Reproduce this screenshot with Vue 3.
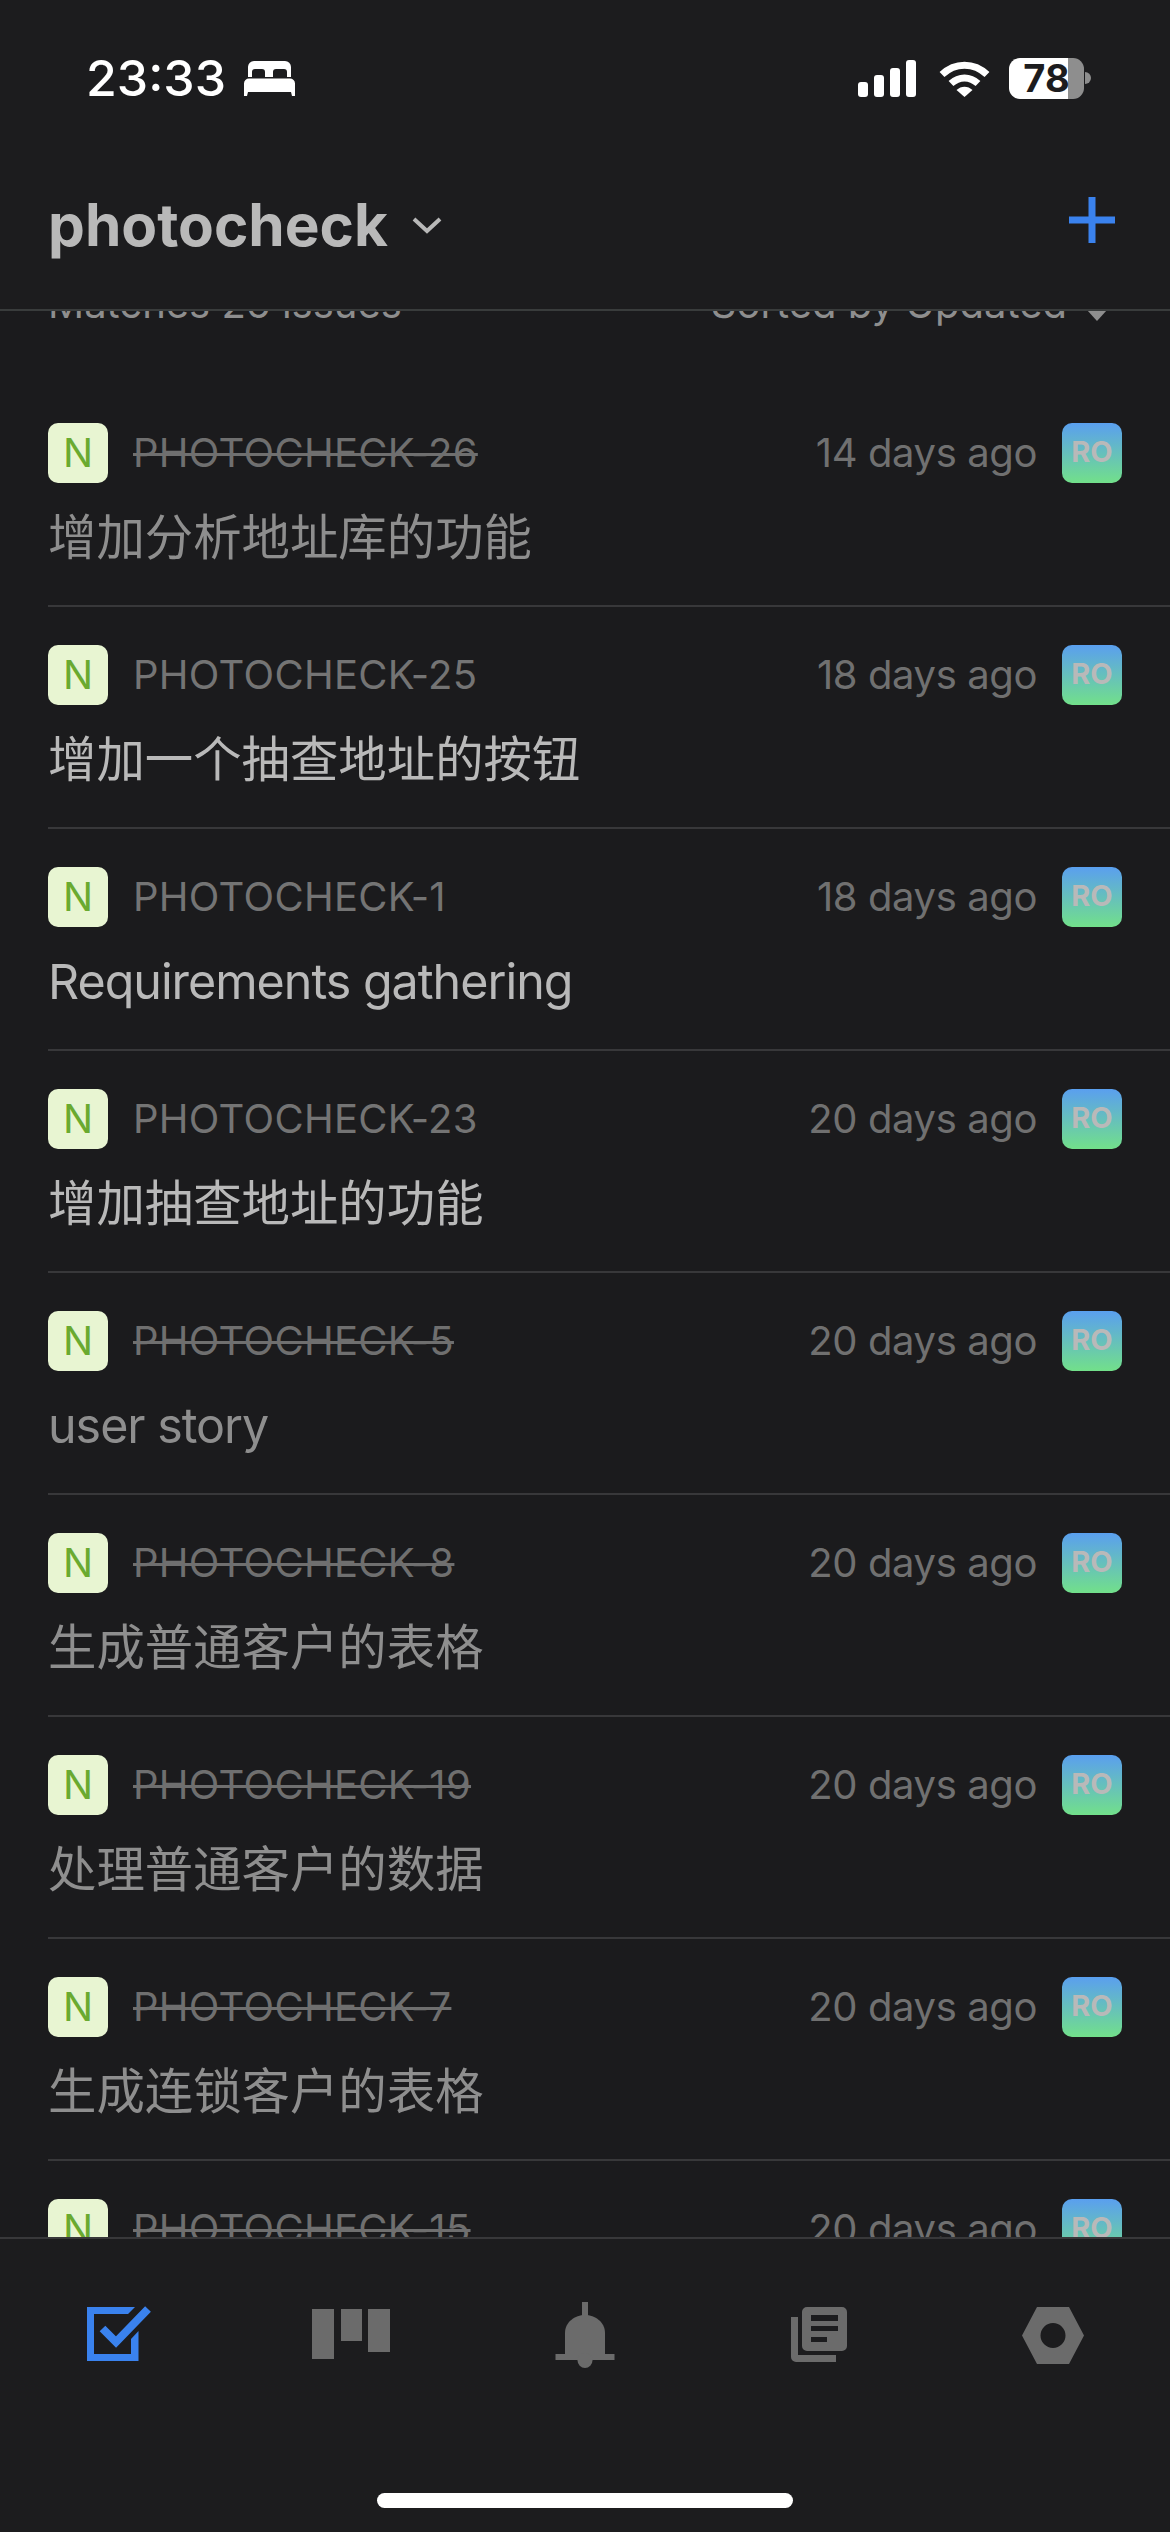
<script setup>
const issues = [
  { id: 'PHOTOCHECK-26', ago: '14 days ago', title: '增加分析地址库的功能', done: true },
  { id: 'PHOTOCHECK-25', ago: '18 days ago', title: '增加一个抽查地址的按钮', done: false },
  { id: 'PHOTOCHECK-1', ago: '18 days ago', title: 'Requirements gathering', done: false, latin: true },
  { id: 'PHOTOCHECK-23', ago: '20 days ago', title: '增加抽查地址的功能', done: false },
  { id: 'PHOTOCHECK-5', ago: '20 days ago', title: 'user story', done: true, latin: true },
  { id: 'PHOTOCHECK-8', ago: '20 days ago', title: '生成普通客户的表格', done: true },
  { id: 'PHOTOCHECK-19', ago: '20 days ago', title: '处理普通客户的数据', done: true },
  { id: 'PHOTOCHECK-7', ago: '20 days ago', title: '生成连锁客户的表格', done: true },
  { id: 'PHOTOCHECK-15', ago: '20 days ago', title: '处理连锁客户的数据', done: true },
]
</script>

<template>
  <div class="screen">
    <header class="top">
      <div class="status">
        <div class="clock">
          <span class="time">23:33</span>
          <svg class="bed" viewBox="0 0 51 35" width="51" height="35">
            <path fill="#fff" fill-rule="evenodd" d="M4 16V6a6 6 0 0 1 6-6h31a6 6 0 0 1 6 6v10zM8 16h13v-5q0-3-3-3h-7q-3 0-3 3zM29 16h14v-5q0-3-3-3h-8q-3 0-3 3z" />
            <path fill="#fff" d="M5 17.500h41a5 5 0 0 1 5 5V35h-3l-1-4H4l-1 4H0V22.500a5 5 0 0 1 5-5z" />
          </svg>
        </div>
        <div class="sys">
          <svg viewBox="0 0 58 37" width="58" height="37">
            <rect x="0" y="22" width="10" height="15" rx="3" fill="#fff" />
            <rect x="16" y="15" width="10" height="22" rx="3" fill="#fff" />
            <rect x="32" y="8" width="10" height="29" rx="3" fill="#fff" />
            <rect x="48" y="0" width="10" height="37" rx="3" fill="#fff" />
          </svg>
          <svg class="wifi" viewBox="0 0 51 37" width="51" height="37">
            <path d="M3 14.500C16 2 35 2 48 14.500" fill="none" stroke="#fff" stroke-width="7" />
            <path d="M12 23.500C20 16 31 16 39 23.500" fill="none" stroke="#fff" stroke-width="7" />
            <path d="M17.500 30C22 25.500 29 25.500 33.500 30L25.500 37z" fill="#fff" />
          </svg>
          <div class="battery"><span>78</span></div>
          <div class="nub"></div>
        </div>
      </div>
      <div class="nav">
        <div class="project">
          <span class="name">photocheck</span>
          <svg viewBox="0 0 30 18" width="30" height="18">
            <path d="M2 3l13 12L28 3" fill="none" stroke="#b8b8b8" stroke-width="4" />
          </svg>
        </div>
        <svg class="plus" viewBox="0 0 46 46" width="46" height="46">
          <path d="M19.500 0h7v19.500H46v7H26.500V46h-7V26.500H0v-7h19.500z" fill="#3a82ee" />
        </svg>
      </div>
    </header>

    <main class="list">
      <div class="summary">
        <span>Matches 26 issues</span>
        <span class="sort">Sorted by Updated <i class="caret"></i></span>
      </div>
      <article v-for="(issue, i) in issues" :key="issue.id" class="row" :class="{ first: i === 0 }">
        <div class="meta">
          <span class="badge">N</span>
          <span class="id" :class="{ struck: issue.done }">{{ issue.id }}</span>
          <span class="ago">{{ issue.ago }}</span>
          <span class="avatar">RO</span>
        </div>
        <div class="title" :class="{ dim: issue.done, latin: issue.latin }">{{ issue.title }}</div>
      </article>
    </main>

    <footer class="tabs">
      <nav class="tabgrid">
        <div class="tab">
          <svg viewBox="0 0 80 80" width="80" height="80">
            <path fill="#3a82ee" d="M10 12H58L51 19H17V59H54V44L61.500 36V66H10Z" />
            <path fill="none" stroke="#3a82ee" stroke-width="8" d="M25.500 33.500L39 47L71 14" />
          </svg>
        </div>
        <div class="tab">
          <svg viewBox="0 0 80 80" width="80" height="80" fill="#6b6b6b">
            <rect x="1" y="14" width="22" height="50" />
            <rect x="30" y="14" width="21" height="32" />
            <rect x="57" y="14" width="22" height="43" />
          </svg>
        </div>
        <div class="tab">
          <svg viewBox="0 0 80 80" width="80" height="80" fill="#6b6b6b">
            <rect x="37" y="7" width="6" height="16" />
            <path d="M20 59V38C20 27 30 20 40 20C50 20 60 27 60 38V59Z" />
            <rect x="10.500" y="59" width="59" height="6" />
            <circle cx="40" cy="65.500" r="7.500" />
          </svg>
        </div>
        <div class="tab">
          <svg viewBox="0 0 80 80" width="80" height="80" fill="#6b6b6b">
            <path d="M12 22h7v38h38v7H17a5 5 0 0 1-5-5z" />
            <path fill-rule="evenodd" d="M28 12h35a5 5 0 0 1 5 5v34a5 5 0 0 1-5 5H28a5 5 0 0 1-5-5V17a5 5 0 0 1 5-5zM32 20v6h27v-6zM32 31v5h27v-5zM32 42v5h16v-5z" />
          </svg>
        </div>
        <div class="tab">
          <svg viewBox="0 0 80 80" width="80" height="80" fill="#6b6b6b">
            <path fill-rule="evenodd" d="M9 40.500L24 12H56L71 40.500L56 69H24ZM40 28a12.500 12.500 0 1 0 0 25a12.500 12.500 0 1 0 0-25z" />
          </svg>
        </div>
      </nav>
      <div class="home"></div>
    </footer>
  </div>
</template>

<style scoped>
.screen {
  width: 1170px;
  height: 2532px;
  display: flex;
  flex-direction: column;
  background: #1b1b1d;
  font-family: Inter, "Noto Sans CJK SC", sans-serif;
  overflow: hidden;
}
.top {
  flex: none;
  height: 311px;
  box-sizing: border-box;
  background: #1c1c1e;
  border-bottom: 2px solid #393c3c;
  position: relative;
  z-index: 1;
}
.status {
  height: 155px;
  box-sizing: border-box;
  padding: 57px 79px 0 86px;
  display: flex;
  justify-content: space-between;
  align-items: flex-start;
}
.clock {
  display: flex;
  align-items: center;
  gap: 18px;
  height: 42px;
}
.time {
  color: #fff;
  font-size: 50px;
  font-weight: 500;
  line-height: 42px;
}
.bed {
  display: block;
}
.sys {
  display: flex;
  align-items: center;
  height: 42px;
}
.wifi {
  margin-left: 23px;
}
.battery {
  margin-left: 19px;
  width: 75px;
  height: 41px;
  border-radius: 11px;
  background: linear-gradient(90deg, #fff 0, #fff 59px, #8e8e8e 59px);
  color: #1c1c1e;
  font-size: 38px;
  font-weight: 700;
  line-height: 41px;
  text-align: center;
}
.nub {
  width: 6px;
  height: 12px;
  margin-left: 1px;
  background: #8e8e8e;
  border-radius: 0 6px 6px 0;
}
.nav {
  height: 140px;
  padding: 0 55px 0 48px;
  display: flex;
  align-items: center;
  justify-content: space-between;
}
.plus {
  margin-bottom: 11px;
}
.project {
  display: flex;
  align-items: center;
  gap: 24px;
}
.name {
  color: #b9b9b9;
  font-size: 58.500px;
  font-weight: 700;
  line-height: 70px;
}
.list {
  flex: 1;
  min-height: 0;
  overflow: hidden;
}
.summary {
  margin: -31px 63px 55px 48px;
  height: 48px;
  display: flex;
  justify-content: space-between;
  color: #8e8e8e;
  font-size: 40px;
  line-height: 48px;
}
.sort {
  display: flex;
  align-items: center;
  gap: 20px;
}
.caret {
  display: block;
  width: 0;
  height: 0;
  margin-top: 22px;
  border-left: 10px solid transparent;
  border-right: 10px solid transparent;
  border-top: 11px solid #8e8e8e;
}
.row {
  margin-left: 48px;
  padding: 40px 48px 37px 0;
  height: 222px;
  box-sizing: border-box;
  border-top: 2px solid #38383a;
}
.row.first {
  border-top-color: transparent;
}
.meta {
  display: flex;
  align-items: center;
  height: 60px;
  margin-top: -2px;
}
.badge {
  width: 60px;
  height: 60px;
  border-radius: 10px;
  background: #e8f5d2;
  color: #6aaa30;
  font-size: 40px;
  line-height: 60px;
  text-align: center;
}
.id {
  margin-left: 25px;
  flex: 1;
  color: #747474;
  font-size: 40px;
  letter-spacing: 0.3px;
  padding-bottom: 2px;
}
.id.struck {
  color: #6f6f6f;
  text-decoration: line-through;
  text-decoration-thickness: 3px;
}
.ago {
  color: #707070;
  font-size: 40px;
  letter-spacing: -0.4px;
  padding-bottom: 2px;
}
.avatar {
  margin-left: 25px;
  width: 60px;
  height: 60px;
  border-radius: 10px;
  background: linear-gradient(180deg, #5a9fef, #72e08a);
  color: #b9b9b9;
  font-size: 29px;
  font-weight: 700;
  line-height: 58px;
  text-align: center;
}
.title {
  margin-top: 25px;
  color: #b9b9b9;
  font-size: 48.400px;
  line-height: 60px;
  white-space: nowrap;
}
.title.latin {
  letter-spacing: -1px;
}
.title.dim {
  color: #8e8e8e;
}
.tabs {
  flex: none;
  height: 295px;
  box-sizing: border-box;
  background: #1c1c1e;
  border-top: 2px solid #38383a;
  position: relative;
}
.tabgrid {
  padding-top: 56px;
  display: grid;
  grid-template-columns: repeat(5, 1fr);
}
.tab {
  display: flex;
  justify-content: center;
}
.home {
  position: absolute;
  left: 377px;
  top: 254px;
  width: 416px;
  height: 15px;
  border-radius: 8px;
  background: #fff;
}
</style>

<style>
html, body {
  margin: 0;
  background: #1c1c1e;
}
</style>
